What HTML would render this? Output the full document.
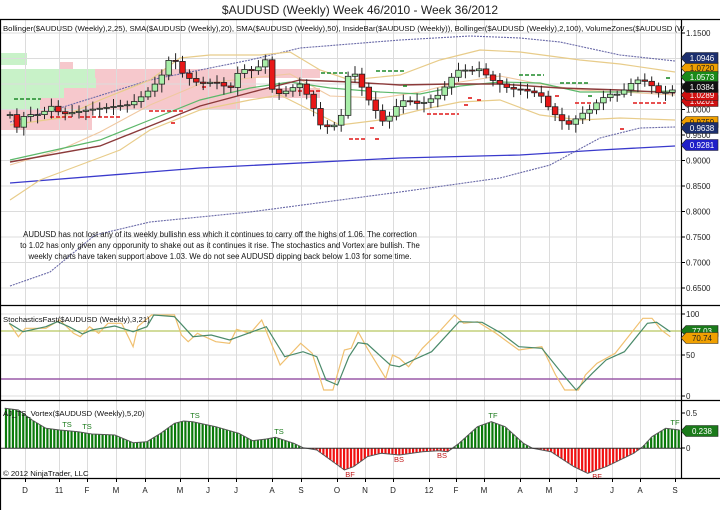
<!DOCTYPE html>
<html><head><meta charset="utf-8"><style>
html,body{margin:0;padding:0;background:#fff;width:720px;height:510px;overflow:hidden}
svg{display:block}
text{font-family:"Liberation Sans",sans-serif}
</style></head><body>
<svg id="s" width="720" height="510" viewBox="0 0 720 510" xmlns="http://www.w3.org/2000/svg">
<rect width="720" height="510" fill="#fff"/>
<text x="360" y="14" font-size="12" text-anchor="middle" fill="#222">$AUDUSD (Weekly)  Week 46/2010 - Week 36/2012</text>
<g id="bg"></g>
<g id="grid" stroke="#dcdcdc" stroke-width="1"></g>
<g id="lines" fill="none"></g>
<g id="cand"></g>
<g id="osc"></g>
<g id="frame" stroke="#000" stroke-width="1.2">
<line x1="0" y1="19.5" x2="720" y2="19.5"/>
<line x1="0" y1="305.5" x2="720" y2="305.5"/>
<line x1="0" y1="400.5" x2="720" y2="400.5"/>
<line x1="0" y1="478.5" x2="720" y2="478.5"/>
<line x1="0.5" y1="19" x2="0.5" y2="510"/>
<line x1="681.5" y1="19" x2="681.5" y2="478"/>
</g>
<g font-size="7.75" fill="#111">
<text x="3" y="31">Bollinger($AUDUSD (Weekly),2,25), SMA($AUDUSD (Weekly),20), SMA($AUDUSD (Weekly),50), InsideBar($AUDUSD (Weekly)), Bollinger($AUDUSD (Weekly),2,100), VolumeZones($AUDUSD (W</text>
<text x="3" y="322">StochasticsFast($AUDUSD (Weekly),3,21)</text>
<text x="3" y="416">AJ_TS_Vortex($AUDUSD (Weekly),5,20)</text>
<text x="3" y="476">© 2012 NinjaTrader, LLC</text>
</g>
<g font-size="7.8" fill="#111" text-anchor="middle">
<text x="220" y="237">AUDUSD has not lost any of its weekly bullishn ess which it continues to carry off the highs of 1.06. The correction</text>
<text x="220" y="248">to 1.02 has only given any opporunity to shake out as it continues it rise. The stochastics and Vortex are bullish. The</text>
<text x="220" y="259">weekly charts have taken support above 1.03. We do not see AUDUSD dipping back below 1.03 for some time.</text>
</g>
<g id="axis" font-size="8" fill="#222"></g>
<g id="tags" font-size="8"></g>
</svg>
<script>
var NS="http://www.w3.org/2000/svg";
function el(p,t,a,txt){var e=document.createElementNS(NS,t);for(var k in a)e.setAttribute(k,a[k]);if(txt!=null)e.textContent=txt;document.getElementById(p).appendChild(e);return e;}
function py(p){return 33+(1.15-p)*510;}
function interp(pts,x){if(x<=pts[0][0])return pts[0][1];for(var i=1;i<pts.length;i++){if(x<=pts[i][0]){var a=pts[i-1],b=pts[i];return a[1]+(b[1]-a[1])*(x-a[0])/(b[0]-a[0]);}}return pts[pts.length-1][1];}
function pl(pts){return pts.map(function(p){return p[0]+","+p[1]}).join(" ");}
var G="#c8f2c8",P="#f6c8cc";
[[0,53,27,12,G],[59,62,14,8,P],[0,69,95,9,G],[95,69,225,9,P],[0,78,96,10,G],[96,78,160,10,P],[0,88,64,10,G],[64,88,156,10,P],[220,88,100,10,P],[0,98,40,12,G],[40,98,200,12,P],[0,110,92,20,P]].forEach(function(r){el("bg","rect",{x:r[0],y:r[1],width:r[2],height:r[3],fill:r[4]});});
var months=[[25,"D"],[59,"11"],[87,"F"],[116,"M"],[145,"A"],[180,"M"],[208,"J"],[236,"J"],[272,"A"],[301,"S"],[337,"O"],[365,"N"],[393,"D"],[429,"12"],[456,"F"],[484,"M"],[520,"A"],[549,"M"],[576,"J"],[612,"J"],[640,"A"],[675,"S"]];
months.forEach(function(m){el("grid","line",{x1:m[0]+.5,y1:20,x2:m[0]+.5,y2:478});el("axis","line",{x1:m[0]+.5,y1:478,x2:m[0]+.5,y2:482,stroke:"#000"});el("axis","text",{x:m[0],y:493,"text-anchor":"middle"},m[1]);});
[1.15,1.10,1.05,1.0,0.95,0.9,0.85,0.8,0.75,0.7,0.65].forEach(function(p){var y=py(p);el("grid","line",{x1:1,y1:y,x2:681,y2:y});el("axis","line",{x1:681,y1:y,x2:685,y2:y,stroke:"#000"});el("axis","text",{x:686,y:y+3},p.toFixed(4));});
[[314,"100"],[355,"50"],[396,"0"]].forEach(function(a){el("grid","line",{x1:1,y1:a[0],x2:681,y2:a[0]});el("axis","line",{x1:681,y1:a[0],x2:685,y2:a[0],stroke:"#000"});el("axis","text",{x:686,y:a[0]+3},a[1]);});
[[413,"0.5"],[448,"0"]].forEach(function(a){el("axis","line",{x1:681,y1:a[0],x2:685,y2:a[0],stroke:"#000"});el("axis","text",{x:686,y:a[0]+3},a[1]);});
function line(pts,c,w,d){var a={points:pl(pts),stroke:c,"stroke-width":w};if(d)a["stroke-dasharray"]=d;el("lines","polyline",a);}
line([[10,183],[200,168],[400,158],[520,155],[600,150],[675,146]],"#3a3acc",1.3);
line([[10,122],[60,108],[150,80],[250,60],[300,48],[400,40],[470,36],[520,38],[560,42],[620,55],[675,61]],"#6a6aa8",1.1,"2,1");
line([[10,286],[50,272],[95,235],[150,222],[250,212],[400,192],[500,178],[550,165],[600,138],[640,128],[675,127]],"#6a6aa8",1.1,"2,1");
line([[10,125],[60,118],[100,100],[150,80],[180,58],[210,55],[260,55],[290,52],[320,70],[350,80],[400,75],[440,60],[480,50],[520,52],[580,60],[620,64],[675,72]],"#e8cc8a",1.2);
line([[10,200],[40,180],[80,165],[120,150],[150,130],[200,110],[250,100],[280,95],[310,110],[340,125],[380,120],[420,110],[460,102],[500,100],[540,115],[580,120],[620,118],[675,120]],"#e8cc8a",1.2);
line([[10,165],[60,150],[100,132],[150,105],[200,84],[250,78],[290,74],[330,96],[380,98],[420,92],[460,82],[500,76],[540,84],[580,90],[620,92],[675,95]],"#f0c8a0",1.1);
line([[10,160],[100,140],[150,120],[200,100],[250,88],[290,82],[330,88],[380,92],[420,94],[460,86],[500,82],[540,83],[580,92],[620,92],[675,91]],"#5cb86a",1.2);
line([[10,162],[100,146],[150,126],[200,106],[260,90],[300,80],[350,82],[400,85],[450,84],[500,84],[560,88],[620,90],[675,93]],"#8b3a3a",1.4);
[[321,73,26,"g"],[376,71,28,"g"],[403,86,6,"g"],[519,75,25,"g"],[560,83,28,"g"],[666,78,5,"g"],[14,99,27,"g"],[588,96,6,"g"],
[50,117,23,"r"],[80,117,40,"r"],[149,111,35,"r"],[171,123,5,"r"],[202,87,5,"r"],[298,91,23,"r"],[349,139,18,"r"],[375,139,6,"r"],[370,128,6,"r"],[427,114,32,"r"],[468,98,6,"r"],[477,100,6,"r"],[464,105,6,"r"],[620,129,6,"r"],[633,103,33,"r"],[555,96,6,"r"],[575,103,18,"r"]].forEach(function(d){el("lines","line",{x1:d[0],y1:d[1],x2:d[0]+d[2],y2:d[1],stroke:d[3]=="g"?"#1f8a2a":"#e01818","stroke-width":1.6,"stroke-dasharray":"4,2"});});
var path=[[10,0.99],[17,0.965],[25,0.99],[40,0.99],[54,1.01],[60,0.99],[90,1.0],[130,1.01],[145,1.03],[160,1.06],[172,1.11],[180,1.075],[190,1.06],[200,1.05],[215,1.055],[230,1.04],[240,1.08],[255,1.075],[265,1.10],[272,1.04],[280,1.03],[290,1.04],[300,1.05],[310,1.02],[320,0.97],[330,0.965],[340,0.975],[348,1.065],[356,1.07],[365,1.03],[375,1.0],[385,0.97],[393,1.0],[405,1.02],[420,1.01],[440,1.03],[450,1.06],[460,1.08],[470,1.075],[480,1.08],[490,1.06],[500,1.05],[510,1.04],[520,1.04],[540,1.03],[550,1.0],[560,0.98],[570,0.97],[580,0.99],[590,1.0],[600,1.02],[610,1.03],[620,1.03],[630,1.05],[640,1.06],[650,1.05],[660,1.03],[675,1.04]];
var prev=interp(path,3);
for(var x=10;x<=676;x+=6.9){var c=interp(path,x),o=prev;prev=c;var up=c>=o;var t=Math.min(py(c),py(o)),b=Math.max(py(c),py(o));if(b-t<1)b=t+1;
el("cand","line",{x1:x,y1:t-3-((x*7)%5),x2:x,y2:b+3+((x*3)%6),stroke:"#222","stroke-width":1});
el("cand","rect",{x:x-2.8,y:t,width:5.6,height:b-t,fill:up?"#a8eea8":"#e81818",stroke:"#222","stroke-width":0.8});}
var K=2.178;function zc(a){return a.map(function(p){return [(p[0]/K).toFixed(1),(p[1]/3+290).toFixed(1)];});}
el("osc","line",{x1:1,y1:331,x2:681,y2:331,stroke:"#b8c860","stroke-width":1.2});
el("osc","line",{x1:1,y1:379,x2:681,y2:379,stroke:"#9a5aa8","stroke-width":1.5});
el("osc","polyline",{fill:"none",stroke:"#f0c070","stroke-width":1.2,points:pl(zc([[20,100],[40,140],[55,115],[100,115],[130,90],[160,130],[175,140],[195,110],[215,130],[235,100],[265,100],[290,170],[300,110],[330,75],[380,75],[395,135],[410,155],[430,130],[470,155],[500,160],[515,118],[545,130],[570,90],[610,225],[655,160],[680,190],[705,300],[725,300],[750,180],[765,175],[780,125],[800,175],[840,265],[855,195],[870,205],[890,230],[920,175],[960,120],[990,75],[1010,100],[1040,95],[1080,130],[1130,180],[1180,170],[1210,255],[1230,300],[1260,300],[1275,255],[1300,220],[1340,190],[1400,85],[1420,85],[1440,120],[1460,140]]))});
el("osc","polyline",{fill:"none",stroke:"#4a8a6a","stroke-width":1.2,points:pl(zc([[20,100],[50,125],[100,110],[125,95],[150,110],[180,132],[200,120],[250,108],[290,125],[320,110],[335,75],[380,80],[420,140],[460,135],[500,150],[550,125],[580,110],[620,200],[660,185],[690,200],[710,270],[735,285],[760,200],[780,158],[800,162],[850,225],[870,230],[900,210],[940,185],[1000,95],[1050,97],[1090,128],[1130,170],[1180,175],[1230,260],[1255,300],[1290,250],[1320,210],[1360,185],[1410,100],[1430,97],[1460,125]]))});
var env=zc([[10,355],[40,360],[70,390],[100,415],[130,420],[170,425],[200,432],[250,435],[290,458],[320,455],[350,430],[380,400],[400,393],[420,395],[470,410],[520,430],[550,452],[580,447],[600,442],[640,460],[660,473],[690,480],[720,510],[750,540],[770,530],[800,500],[830,490],[870,495],[920,485],[955,482],[975,485],[1000,460],[1040,410],[1070,395],[1100,410],[1140,460],[1160,475],[1200,485],[1250,530],[1280,550],[1320,530],[1380,490],[1400,470],[1420,440],[1450,415],[1480,420]]).map(function(p){return [+p[0],+p[1]];});
var z=448.3;
for(var x=6;x<=679;x+=3.45){var v=interp(env,x);el("osc","rect",{x:x-1.1,y:Math.min(v,z),width:2.2,height:Math.abs(v-z)+0.1,fill:v<z?"#0a7a0a":"#f01010"});}
el("osc","polyline",{fill:"none",stroke:"#555","stroke-width":1,points:pl(env)});
el("osc","line",{x1:1,y1:z,x2:681,y2:z,stroke:"#333","stroke-width":1});
[[67,427,"TS","#1a7a1a"],[87,429,"TS","#1a7a1a"],[195,418,"TS","#1a7a1a"],[279,434,"TS","#1a7a1a"],[493,418,"TF","#1a7a1a"],[675,425,"TF","#1a7a1a"],[399,462,"BS","#c01818"],[442,458,"BS","#c01818"],[350,477,"BF","#c01818"],[597,479,"BF","#c01818"]].forEach(function(l){el("osc","text",{x:l[0],y:l[1],"font-size":7.5,fill:l[3],"text-anchor":"middle"},l[2]);});
function tag(y,txt,bg,fg){el("tags","path",{d:"M681 "+y+" L686 "+(y-5.5)+" L718 "+(y-5.5)+" L718 "+(y+5.5)+" L686 "+(y+5.5)+" Z",fill:bg,stroke:"#222","stroke-width":0.6});el("tags","text",{x:702,y:y+3,"text-anchor":"middle",fill:fg},txt);}
tag(101,"1.0201","#d01010","#fff");tag(95,"1.0289","#d01010","#fff");
tag(68,"1.0720","#f0a000","#222");tag(58,"1.0946","#1c2f6e","#fff");tag(77,"1.0573","#1a8a1a","#fff");tag(87,"1.0384","#111","#fff");
tag(122,"0.9759","#f0a000","#222");tag(128,"0.9638","#1c2f6e","#fff");tag(145,"0.9281","#2020c8","#fff");
tag(331,"77.03","#1a7a1a","#fff");tag(338,"70.74","#f0a000","#222");tag(431,"0.238","#1a7a1a","#fff");
</script>
</body></html>
